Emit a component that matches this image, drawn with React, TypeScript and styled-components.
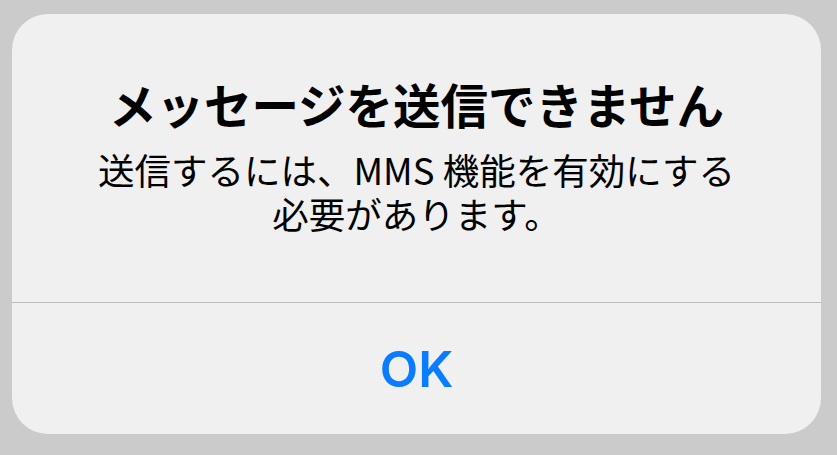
import * as React from "react";
import styled, { createGlobalStyle } from "styled-components";

const GlobalStyle = createGlobalStyle`
  html, body {
    margin: 0;
    padding: 0;
    background: #cbcbcb;
  }
  body {
    font-family: "Noto Sans CJK JP", "Noto Sans", sans-serif;
  }
`;

const Screen = styled.div`
  width: 837px;
  height: 455px;
  box-sizing: border-box;
  padding: 14px 16px 21px 12px;
  display: flex;
`;

const Dialog = styled.div`
  flex: 1;
  display: flex;
  flex-direction: column;
  background: #f0f0f0;
  border-radius: 36px;
  overflow: hidden;
`;

const Body = styled.div`
  height: 288px;
  box-sizing: border-box;
  padding-top: 65px;
  display: flex;
  flex-direction: column;
  align-items: center;
  text-align: center;
`;

const Title = styled.h1`
  margin: 0;
  font-size: 47.5px;
  line-height: 50px;
  font-weight: 700;
  color: #000;
`;

const Message = styled.p`
  margin: 19px 0 0;
  font-size: 36.5px;
  line-height: 44px;
  font-weight: 400;
  color: #000;
`;

const Divider = styled.hr`
  margin: 0;
  border: none;
  height: 1px;
  background: #bcbcbc;
`;

const Button = styled.button`
  flex: 1;
  border: none;
  background: transparent;
  padding: 0;
  font-family: Inter, "Liberation Sans", sans-serif;
  font-size: 50px;
  font-weight: 600;
  color: #0a7cff;
`;

export default function App() {
  return (
    <>
      <GlobalStyle />
      <Screen>
        <Dialog>
          <Body>
            <Title>メッセージを送信できません</Title>
            <Message>
              送信するには、MMS 機能を有効にする
              <br />
              必要があります。
            </Message>
          </Body>
          <Divider />
          <Button>OK</Button>
        </Dialog>
      </Screen>
    </>
  );
}
